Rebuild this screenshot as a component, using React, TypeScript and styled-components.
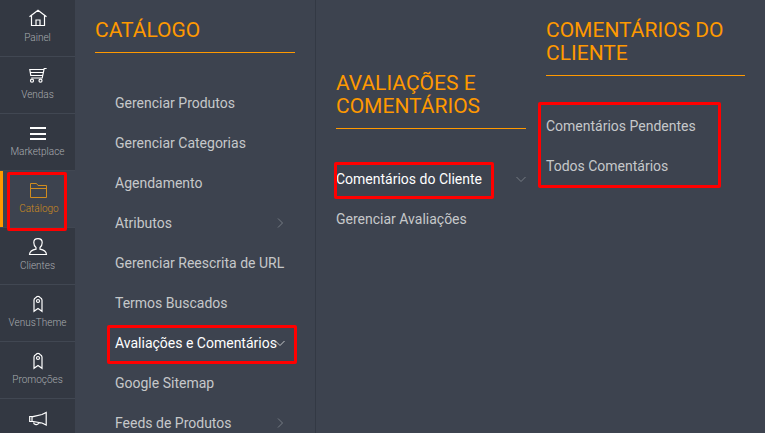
import React from "react";
import styled, { createGlobalStyle, css } from "styled-components";

const color = {
  rail: "#333842",
  panel: "#3d434f",
  accent: "#ff9900",
  accentMuted: "#d08c1e",
  text: "#c6c8ca",
  label: "#a9acb0",
  mark: "#ff0000",
};

const GlobalStyle = createGlobalStyle`
  * { box-sizing: border-box; }
  body {
    margin: 0;
    background: ${color.panel};
    font-family: Roboto, "Liberation Sans", sans-serif;
  }
  ul { list-style: none; margin: 0; padding: 0; }
`;

const Page = styled.div`
  display: flex;
  height: 100vh;
  overflow: hidden;
  background: ${color.panel};
`;

const Rail = styled.nav`
  flex: 0 0 75px;
  background: ${color.rail};
`;

const RailLink = styled.a<{ $active?: boolean }>`
  position: relative;
  display: flex;
  flex-direction: column;
  align-items: center;
  height: 57px;
  padding-top: 7px;
  border-bottom: 1px solid #414752;
  font-size: 10px;
  font-weight: 300;
  line-height: 18px;
  color: ${color.label};
  text-decoration: none;

  svg {
    width: 20px;
    height: 22px;
    color: #fff;
  }

  ${(p) =>
    p.$active &&
    css`
      padding-left: 3px;
      background: ${color.panel};
      box-shadow: inset 3px 0 0 ${color.accent};
      color: ${color.accentMuted};

      svg {
        color: ${color.accentMuted};
      }
    `}
`;

const Columns = styled.main`
  flex: 1;
  display: grid;
  grid-template-columns: minmax(0, 241fr) minmax(0, 210fr) minmax(0, 239fr);
`;

const Column = styled.section<{ $lowered?: boolean; $divided?: boolean; $flushRight?: boolean }>`
  padding: ${(p) => (p.$lowered ? "72px" : "19px")} ${(p) => (p.$flushRight ? "0" : "20px")} 0 20px;
  border-right: ${(p) => (p.$divided ? "1px solid #333944" : "0")};
`;

const Title = styled.h2`
  margin: 0 0 30px;
  padding-bottom: 10px;
  border-bottom: 1px solid ${color.accent};
  font-size: 21px;
  font-weight: 400;
  line-height: 23px;
  text-transform: uppercase;
  color: ${color.accent};
`;

const Menu = styled.ul<{ $indented?: boolean }>`
  && {
    position: relative;
    padding: ${(p) => (p.$indented ? "0 10px 0 20px" : "0")};
  }
`;

const MenuItem = styled.li`
  position: relative;
`;

const MenuLink = styled.a<{ $active?: boolean }>`
  display: block;
  font-size: 14px;
  line-height: 40px;
  white-space: nowrap;
  text-decoration: none;
  color: ${(p) => (p.$active ? "#fff" : color.text)};
`;

const Chevron = styled.svg<{ $bright?: boolean }>`
  position: absolute;
  right: 0;
  top: 15px;
  width: 10px;
  height: 10px;
  fill: none;
  stroke: ${(p) => (p.$bright ? "#c6c8ca" : "#777c84")};
`;

const Highlight = styled.span<{ $inset: string }>`
  position: absolute;
  inset: ${(p) => p.$inset};
  border: 3px solid ${color.mark};
  border-radius: 2px;
  pointer-events: none;
`;

function Icon({ children }: { children: React.ReactNode }) {
  return (
    <svg viewBox="0 0 20 22" fill="none" stroke="currentColor" strokeWidth="1.2" aria-hidden="true">
      {children}
    </svg>
  );
}

const HomeIcon = (
  <Icon>
    <path d="M1.500 9.800 10 3.200l8.500 6.600M3.500 8.600v9.900h4.500v-5.500h4v5.500h4.500V8.600M8 18.500h4" />
  </Icon>
);

const CartIcon = (
  <Icon>
    <path d="M18.600 4.500h-2.400l-2 9.500H3.200M15.800 5.500H1.800l1 6h11.600M2 8.500h13.400" />
    <circle cx="4" cy="16.700" r="1.500" />
    <circle cx="12.500" cy="16.700" r="1.500" />
  </Icon>
);

const BarsIcon = (
  <Icon>
    <path d="M2 7h16M2 13h16M2 18h16" strokeWidth="2" />
  </Icon>
);

const FolderIcon = (
  <Icon>
    <path d="M1.500 19.500v-14h6l1.500 2h8.500v12zM1.500 10.500h16" strokeWidth="1" />
  </Icon>
);

const PersonIcon = (
  <Icon>
    <path d="M8 12.500C6.200 11 5.800 9.200 5.800 7.500 5.800 5.200 7.600 3.700 10 3.700s4.200 1.500 4.200 3.800c0 1.700-.4 3.500-2.200 5v1.700c3.500.7 6.200 2.300 6.500 5.300h-17c.3-3 3-4.600 6.500-5.300z" />
  </Icon>
);

const TagIcon = (
  <Icon>
    <path d="M6 19.300V8c0-1 1-2 2-2.500.5-1.500 3.500-1.500 4 0 1 .5 2 1.500 2 2.500v11.300l-4-2.800z" />
    <circle cx="10" cy="9" r="1.500" />
  </Icon>
);

const MegaphoneIcon = (
  <Icon>
    <path d="M18.200 6.500v12.500L14 17 4 15.300V10.800L14 8.500zM4 10.500H1.700v5H4M5.500 15.700c.2 3.500 4.500 4 5.300 1" />
  </Icon>
);

const sections = [
  { name: "Painel", icon: HomeIcon },
  { name: "Vendas", icon: CartIcon },
  { name: "Marketplace", icon: BarsIcon },
  { name: "Catálogo", icon: FolderIcon, active: true },
  { name: "Clientes", icon: PersonIcon },
  { name: "VenusTheme", icon: TagIcon },
  { name: "Promoções", icon: TagIcon },
  { name: "", icon: MegaphoneIcon },
];

type Entry = {
  name: string;
  chevron?: "right" | "down";
  active?: boolean;
  bright?: boolean;
  highlight?: string;
};

const catalog: Entry[] = [
  { name: "Gerenciar Produtos" },
  { name: "Gerenciar Categorias" },
  { name: "Agendamento" },
  { name: "Atributos", chevron: "right" },
  { name: "Gerenciar Reescrita de URL" },
  { name: "Termos Buscados" },
  { name: "Avaliações e Comentários", chevron: "down", active: true, bright: true, highlight: "2px -12px -1px -8px" },
  { name: "Google Sitemap" },
  { name: "Feeds de Produtos", chevron: "right" },
];

const reviews: Entry[] = [
  { name: "Comentários do Cliente", chevron: "down", active: true, highlight: "3px 32px 0 -2px" },
  { name: "Gerenciar Avaliações" },
];

const comments: Entry[] = [{ name: "Comentários Pendentes" }, { name: "Todos Comentários" }];

function Entries({ items }: { items: Entry[] }) {
  return (
    <>
      {items.map((item) => (
        <MenuItem key={item.name}>
          <MenuLink href="#" $active={item.active}>
            {item.name}
          </MenuLink>
          {item.chevron && (
            <Chevron viewBox="0 0 10 10" $bright={item.bright} aria-hidden="true">
              <path d={item.chevron === "down" ? "M.5 3 5 7.500 9.500 3" : "M3 .5 7.500 5 3 9.500"} />
            </Chevron>
          )}
          {item.highlight && <Highlight $inset={item.highlight} />}
        </MenuItem>
      ))}
    </>
  );
}

export default function App() {
  return (
    <>
      <GlobalStyle />
      <Page>
        <Rail>
          {sections.map((s, i) => (
            <RailLink key={i} href="#" $active={s.active}>
              {s.icon}
              {s.name}
              {s.active && <Highlight $inset="1px 8px -4px 7px" />}
            </RailLink>
          ))}
        </Rail>
        <Columns>
          <Column $divided>
            <Title>Catálogo</Title>
            <Menu $indented>
              <Entries items={catalog} />
            </Menu>
          </Column>
          <Column $lowered $flushRight>
            <Title>Avaliações e Comentários</Title>
            <Menu>
              <Entries items={reviews} />
            </Menu>
          </Column>
          <Column>
            <Title>Comentários do Cliente</Title>
            <Menu>
              <Entries items={comments} />
              <Highlight $inset="-4px 24px -2px -8px" />
            </Menu>
          </Column>
        </Columns>
      </Page>
    </>
  );
}
